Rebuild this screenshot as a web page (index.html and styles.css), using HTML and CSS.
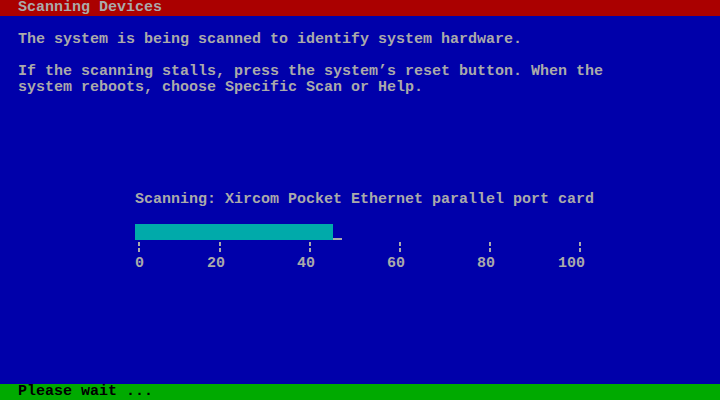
FILE: index.html
```html
<!DOCTYPE html>
<html>
<head>
<meta charset="utf-8">
<link rel="stylesheet" href="styles.css">
</head>
<body>
<div class="screen">
  <div class="titlebar">Scanning Devices</div>
  <div class="main">
    <p class="line gap1">The system is being scanned to identify system hardware.</p>
    <p class="line gap1">If the scanning stalls, press the system’s reset button. When the<br>system reboots, choose Specific Scan or Help.</p>
    <div class="progress">
      <p class="line">Scanning: Xircom Pocket Ethernet parallel port card</p>
      <div class="barrow gap1">
        <div class="bar" style="width:198px"></div>
        <div class="cursor"></div>
      </div>
      <div class="ticks"><span class="tick"></span><span class="tick"></span><span class="tick"></span><span class="tick"></span><span class="tick"></span><span class="tick"></span></div>
      <p class="line labels">0       20        40        60        80       100</p>
    </div>
  </div>
  <div class="statusbar">Please wait ...</div>
</div>
</body>
</html>
```
FILE: styles.css
```css
html, body {
  margin: 0;
  padding: 0;
  background: #0000aa;
}
.screen {
  width: 720px;
  height: 400px;
  display: flex;
  flex-direction: column;
  background: #0000aa;
  color: #aaaaaa;
  font-family: "Liberation Mono", "DejaVu Sans Mono", monospace;
  font-size: 15px;
  font-weight: bold;
  line-height: 16px;
  white-space: pre;
}
.titlebar {
  height: 16px;
  background: #aa0000;
  padding-left: 18px;
}
.main {
  flex: 1;
  display: flex;
  flex-direction: column;
  padding-left: 18px;
}
.line {
  margin: 0;
}
.gap1 {
  margin-top: 16px;
}
.progress {
  margin-top: 96px;
  padding-left: 117px;
  display: flex;
  flex-direction: column;
}
.barrow {
  display: flex;
  align-items: flex-end;
  height: 16px;
}
.bar {
  height: 16px;
  background: #00aaaa;
}
.cursor {
  width: 9px;
  height: 2px;
  background: #aaaaaa;
}
.ticks {
  display: flex;
  height: 16px;
  gap: 88px;
  padding-left: 3px;
}
.ticks .tick:nth-child(2) {
  margin-left: -9px;
}
.tick {
  width: 2px;
  height: 16px;
  background: linear-gradient(#0000aa 0 2px, #aaaaaa 2px 6px, #0000aa 6px 8px, #aaaaaa 8px 12px, #0000aa 12px);
}
.statusbar {
  height: 16px;
  background: #00aa00;
  color: #000000;
  padding-left: 18px;
}
```
